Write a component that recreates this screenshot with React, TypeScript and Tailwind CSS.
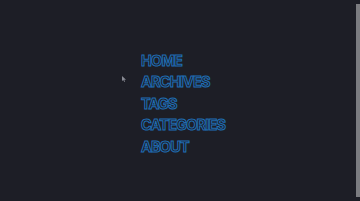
import React from "react";

const items = ["HOME", "ARCHIVES", "TAGS", "CATEGORIES", "ABOUT"];

export default function App() {
  return (
    <div className="flex h-[201px] w-[360px] overflow-hidden bg-[#1d1e26]">
      <div className="relative flex-1">
        <div className="absolute left-[122px] top-[76px] h-[6px] w-[4px]">
          <svg width="4" height="6" viewBox="0 0 4 6">
            <path d="M0 0 L0 5 L1.3 4 L2.3 6 L3 5.6 L2.2 3.8 L4 3.8 Z" fill="#8a8c95" />
          </svg>
        </div>
        <ul className="flex flex-col gap-[3px] pl-[141px] pt-[52px] font-['Inter',sans-serif]">
          {items.map((t) => (
            <li
              key={t}
              className="text-[14.5px] font-bold leading-[18.4px] tracking-[-0.8px] text-transparent [-webkit-text-stroke:1px_#1f6db3]"
            >
              {t}
            </li>
          ))}
        </ul>
      </div>
      <div className="flex w-[4px] flex-col py-[4px]">
        <div className="flex-1 bg-[#7b7c80]" />
      </div>
    </div>
  );
}
